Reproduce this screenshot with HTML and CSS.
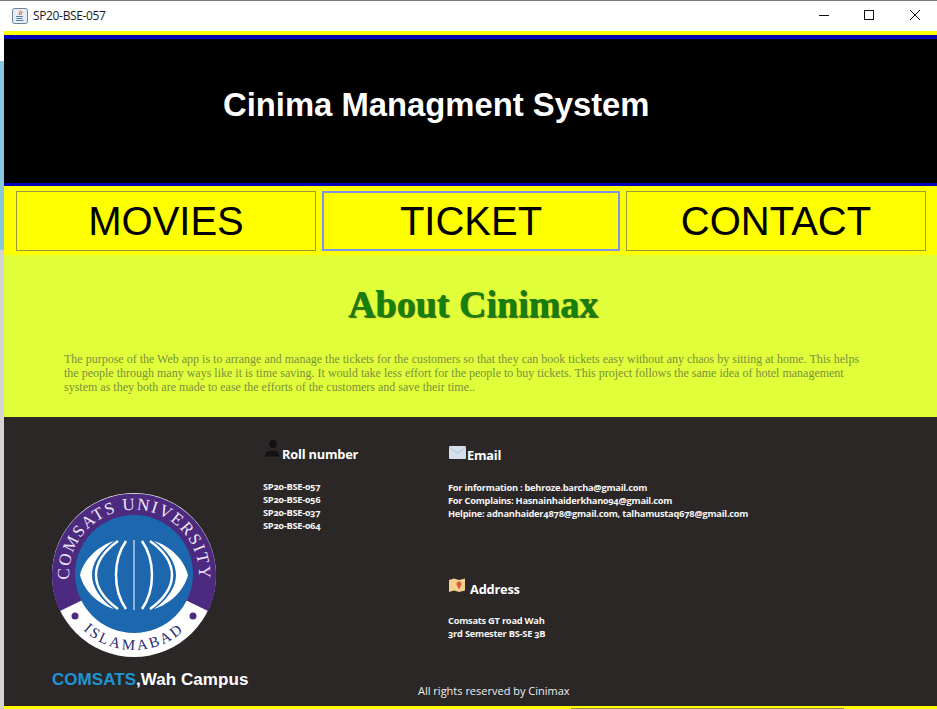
FILE: index.html
```html
<!DOCTYPE html>
<html lang="en">
<head>
<meta charset="utf-8">
<title>SP20-BSE-057</title>
<link rel="stylesheet" href="styles.css">
</head>
<body>
<div class="window">
  <div class="titlebar">
    <div class="title-left">
      <svg class="java" viewBox="0 0 16 16" width="16" height="16">
        <rect x="0.5" y="0.5" width="15" height="15" rx="2" fill="#e6edf5" stroke="#6f8296"/>
        <path d="M8 2.500c1.500 1.500-2 2.500-.5 4.500M10 3.500c.8 1.200-2 2-.8 3.500" fill="none" stroke="#d9692a" stroke-width="1.100"/>
        <path d="M4 8.500h7M4.500 10.500h6M4 12.500h7.500" fill="none" stroke="#5a7ea6" stroke-width="1"/>
      </svg>
      <span class="title-text">SP20-BSE-057</span>
    </div>
    <div class="controls">
      <svg viewBox="0 0 46 20" width="46" height="20"><path d="M20 14.500h10" stroke="#111" fill="none"/></svg>
      <svg viewBox="0 0 46 20" width="46" height="20"><rect x="19.500" y="9.500" width="9" height="9" stroke="#111" fill="none"/></svg>
      <svg viewBox="0 0 46 20" width="46" height="20"><path d="M19 9l10 10M29 9l-10 10" stroke="#111" fill="none"/></svg>
    </div>
  </div>
  <div class="stage">
    <div class="content">
      <header class="banner"><h1>Cinima Managment System</h1></header>
      <nav class="nav">
        <a class="nav-btn">MOVIES</a>
        <a class="nav-btn nav-btn-focus">TICKET</a>
        <a class="nav-btn">CONTACT</a>
      </nav>
      <section class="about">
        <h2>About Cinimax</h2>
        <p>The purpose of the Web app is to arrange and manage the tickets for the customers so that they can book tickets easy without any chaos by sitting at home. This helps the people through many ways like it is time saving. It would take less effort for the people to buy tickets. This project follows the same idea of hotel management system as they both are made to ease the efforts of the customers and save their time..</p>
      </section>
      <footer class="footer">
        <div class="brand">
          <svg class="logo" viewBox="-85 -85 170 170" width="170" height="170">
            <defs>
              <path id="arcTop" d="M-63.200 15A65 65 0 1 1 63.200 15"/>
              <path id="arcBot" d="M-54 52A75 75 0 0 0 54 52"/>
            </defs>
            <circle r="82" fill="#fff"/>
            <path d="M0 0L-74 36A82 82 0 1 1 74 36Z" fill="#4b2a80"/>
            <circle cy="-1" r="59" fill="#1c67ae"/>
            <text class="logo-top"><textPath href="#arcTop" startOffset="50%" text-anchor="middle">COMSATS UNIVERSITY</textPath></text>
            <text class="logo-bot"><textPath href="#arcBot" startOffset="50%" text-anchor="middle">ISLAMABAD</textPath></text>
            <circle cx="-59" cy="41" r="3.500" fill="#4b2a80"/>
            <circle cx="59" cy="41" r="3.500" fill="#4b2a80"/>
            <path d="M-54 0C-50 -16 -36 -29 -20 -34C-34 -24 -42 -12 -42 0C-42 12 -34 24 -20 34C-36 29 -50 16 -54 0Z" fill="#fff"/>
            <path d="M54 0C50 -16 36 -29 20 -34C34 -24 42 -12 42 0C42 12 34 24 20 34C36 29 50 16 54 0Z" fill="#fff"/>
            <path d="M-16 -34C-30 -24 -38 -12 -38 0C-38 12 -30 24 -16 34M16 -34C30 -24 38 -12 38 0C38 12 30 24 16 34" fill="none" stroke="#fff" stroke-width="2.500"/>
            <path d="M-8 -34C-15 -24 -18 -12 -18 0C-18 12 -15 24 -8 34M8 -34C15 -24 18 -12 18 0C18 12 15 24 8 34" fill="none" stroke="#fff" stroke-width="2.500"/>
            <path d="M0 -35V35" fill="none" stroke="#fff" stroke-width="1"/>
          </svg>
          <div class="campus"><span class="campus-blue">COMSATS</span>,Wah Campus</div>
        </div>
        <div class="col col-roll">
          <h3 class="head">
            <svg class="ico ico-user" viewBox="0 0 18 20" width="18" height="20"><circle cx="10" cy="6" r="4.500" fill="#111" stroke="#3a3636" stroke-width=".6"/><path d="M1 19c1-6 5-7 9-7s7 2 7 7z" fill="#141212" stroke="#3a3636" stroke-width=".6"/></svg>
            Roll number
          </h3>
          <ul class="lines">
            <li>SP20-BSE-057</li>
            <li>SP20-BSE-056</li>
            <li>SP20-BSE-037</li>
            <li>SP20-BSE-064</li>
          </ul>
        </div>
        <div class="col col-contact">
          <div class="block-email">
            <h3 class="head">
              <svg class="ico ico-mail" viewBox="0 0 17 13" width="17" height="13"><rect width="17" height="13" rx="1" fill="#d5e0ec"/><path d="M0 1l8.500 6.500L17 1" fill="none" stroke="#aebccb"/></svg>
              Email
            </h3>
            <ul class="lines">
              <li>For information : behroze.barcha@gmail.com</li>
              <li>For Complains: Hasnainhaiderkhan094@gmail.com</li>
              <li>Helpine: adnanhaider4878@gmail.com, talhamustaq678@gmail.com</li>
            </ul>
          </div>
          <div class="block-address">
            <h3 class="head head-address">
              <svg class="ico ico-map" viewBox="0 0 16 15" width="16" height="15"><path d="M0 2l5-1.500 5 1.500 6-1.500v12l-6 1.500-5-1.500-5 1.500z" fill="#f3d08e"/><circle cx="10" cy="6" r="2.500" fill="#d9593a"/><path d="M8 7.500l2 4 2-4" fill="#d9593a"/></svg>
              Address
            </h3>
            <ul class="lines lines-address">
              <li>Comsats GT road Wah</li>
              <li>3rd Semester BS-SE 3B</li>
            </ul>
          </div>
          <div class="rights">All rights reserved by Cinimax</div>
        </div>
      </footer>
      <div class="bottom-strip"><div class="bottom-line"></div></div>
    </div>
  </div>
</div>
</body>
</html>
```
FILE: styles.css
```css
* { box-sizing: border-box; }
html, body { margin: 0; padding: 0; }
body { width: 937px; height: 709px; overflow: hidden; background: #fff; font-family: "Liberation Sans", Arial, sans-serif; }
.window { width: 937px; height: 709px; display: flex; flex-direction: column; border-top: 1px solid #7a7a7a; }
.titlebar { height: 30px; display: flex; justify-content: space-between; align-items: flex-start; background: #fff; padding-left: 12px; flex: none; }
.title-left { display: flex; align-items: center; gap: 5px; height: 29px; }
.title-text { font: 12px "Open Sans", sans-serif; letter-spacing: -0.35px; color: #1a1a1a; }
.controls { display: flex; }
.stage { flex: 1; min-height: 0; padding-left: 4px; background: linear-gradient(#fff 0 30px, #86c6de 30px 219px, #d4d4d4 219px); }
.content { height: 100%; display: flex; flex-direction: column; background: #ff0; }
.banner { height: 155px; flex: none; background: linear-gradient(#ff0 0 4px, #0000b4 4px 8px, #000 8px); border-bottom: 3px solid #0000b4; display: flex; align-items: center; padding: 0 0 4px 219px; }
.banner h1 { margin: 0; color: #fff; font: bold 32.800px "Liberation Sans", sans-serif; }
.nav { height: 69px; flex: none; display: flex; gap: 6px; background: #ff0; padding: 5px 11px 4px 12px; }
.nav-btn { flex: 1 1 0; border: 1px solid #9a9a3a; font-size: 40px; color: #000; display: flex; align-items: center; justify-content: center; }
.nav-btn-focus { border: 2px solid #7b93e0; flex: 0 0 298px; }
.about { height: 162px; flex: none; background: #e0ff3a; padding-top: 29px; }
.about h2 { margin: 0; padding-left: 5px; text-align: center; font: bold 38px/40px "Liberation Serif", serif; color: #16800f; text-shadow: 1px 1px 1px #3f5a18; }
.about p { margin: 28px 0 0 60px; width: 800px; font: 12px/14px "Liberation Serif", serif; color: #7d8f3d; }
.footer { flex: 1; min-height: 0; display: flex; background: #2b2727; color: #fff; }
.brand { flex: none; width: 259px; padding: 73px 0 0 45px; }
.logo { display: block; }
.campus { font: bold 17px "Liberation Sans", sans-serif; letter-spacing: 0.05px; margin: 10px 0 0 3px; color: #fff; white-space: nowrap; }
.campus-blue { color: #1f94d2; }
.col { flex: none; }
.col-roll { width: 185px; padding-top: 21px; }
.col-contact { flex: 1; padding-top: 29px; position: relative; }
.col-contact .head { padding-left: 1px; }
.head { margin: 0; font: bold 12.800px/18px "Open Sans", sans-serif; letter-spacing: -0.2px; color: #fff; display: flex; align-items: flex-end; gap: 1px; white-space: nowrap; }
.head-address { gap: 5px; }
.ico { display: block; flex: none; margin-bottom: 5px; }
.lines { list-style: none; margin: 17px 0 0; padding: 0; font: bold 9.300px/13px "Open Sans", sans-serif; letter-spacing: -0.25px; font-variant-numeric: oldstyle-nums; color: #f5f5f5; white-space: nowrap; }
.col-roll .lines { margin-top: 17px; }
.block-address { margin-top: 58px; }
.lines-address { margin-top: 16px; }
.rights { position: absolute; left: -30px; top: 266px; font: 11px "Open Sans", sans-serif; color: #eee; white-space: nowrap; }
.bottom-strip { height: 3px; flex: none; background: #ff0; display: flex; align-items: flex-end; padding-left: 567px; }
.bottom-line { width: 273px; height: 1px; background: #8d8d45; }
.logo-top { font: 17px "Liberation Serif", serif; fill: #f0e6f7; letter-spacing: 1.600px; }
.logo-bot { font: 15px "Liberation Serif", serif; fill: #2c2a70; letter-spacing: 2.500px; }
```
